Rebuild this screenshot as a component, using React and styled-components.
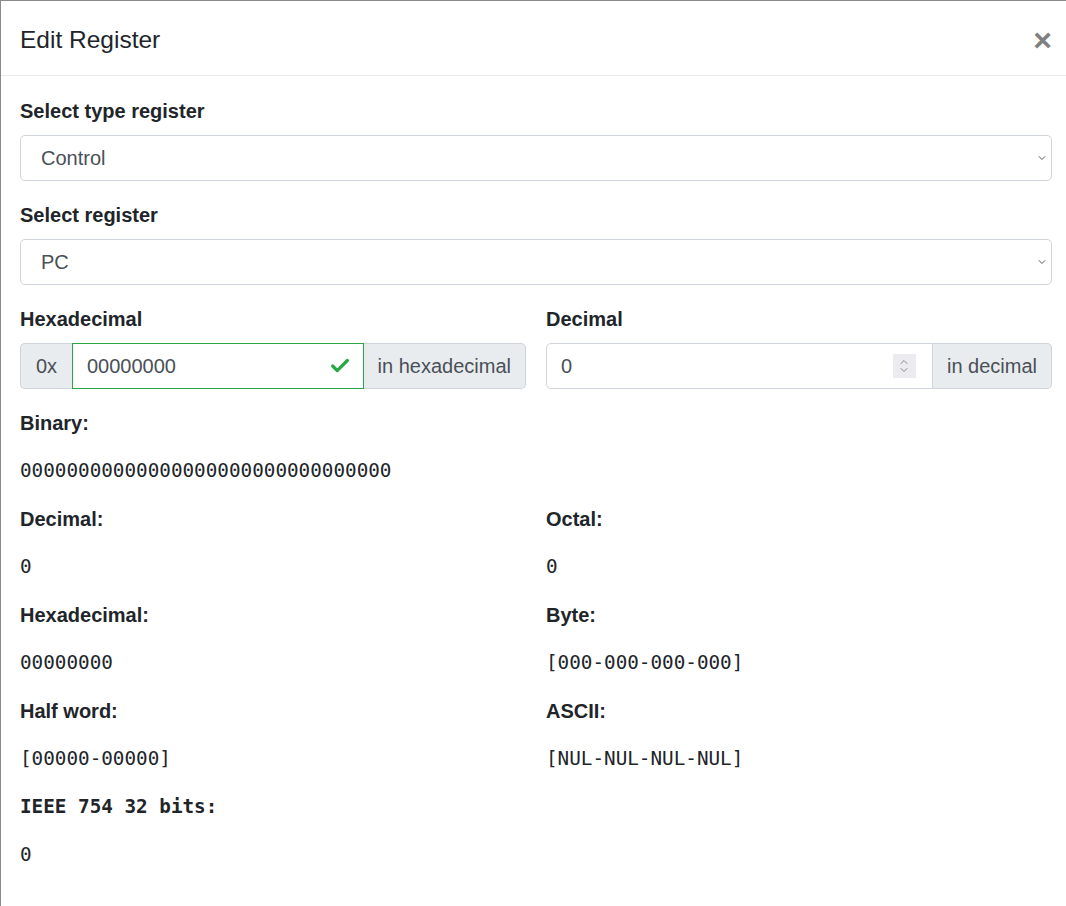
import React from "react";
import styled, { createGlobalStyle } from "styled-components";
import { ChevronDown, ChevronUp, Check } from "lucide-react";

const GlobalStyle = createGlobalStyle`
  html, body {
    margin: 0;
    padding: 0;
    background: #ffffff;
    overflow: hidden;
  }
  body {
    font-family: "Liberation Sans", Arial, sans-serif;
    color: #212529;
  }
`;

const Modal = styled.div`
  width: 1072px;
  min-height: 906px;
  box-sizing: border-box;
  background: #ffffff;
  border-top: 1px solid #8a8a8a;
  border-left: 1px solid #8a8a8a;
`;

const Header = styled.div`
  height: 75px;
  box-sizing: border-box;
  display: flex;
  align-items: center;
  justify-content: space-between;
  padding: 3px 20px 0 19px;
  border-bottom: 1px solid #e9ecef;
`;

const Title = styled.h5`
  margin: 0;
  font-size: 24.5px;
  font-weight: 400;
  line-height: 30px;
  color: #212529;
`;

const Close = styled.button`
  border: 0;
  background: transparent;
  padding: 0;
  font-family: "Liberation Sans", Arial, sans-serif;
  font-size: 32px;
  font-weight: 700;
  line-height: 1;
  color: #808080;
  cursor: pointer;
`;

const Body = styled.div`
  padding: 20px 20px 20px 19px;
`;

const FormGroup = styled.div`
  margin-bottom: ${(p) => (p.last ? "20px" : "19px")};
`;

const Label = styled.label`
  display: block;
  font-size: 20px;
  font-weight: 700;
  line-height: 30px;
  margin-bottom: 9px;
  color: #212529;
`;

const SelectWrap = styled.div`
  position: relative;
`;

const Select = styled.select`
  width: 100%;
  height: 46px;
  box-sizing: border-box;
  appearance: none;
  -webkit-appearance: none;
  border: 1px solid #ced4da;
  border-radius: 5px;
  background: #ffffff;
  padding: 0 20px;
  font-family: "Liberation Sans", Arial, sans-serif;
  font-size: 20px;
  color: #495057;
`;

const SelectArrow = styled.span`
  position: absolute;
  right: 4px;
  top: 50%;
  transform: translateY(-50%);
  display: flex;
  color: #5a5a5a;
  pointer-events: none;
`;

const Row = styled.div`
  display: grid;
  grid-template-columns: 1fr 1fr;
  column-gap: 20px;
`;

const InputGroup = styled.div`
  display: flex;
  height: 46px;
`;

const Addon = styled.div`
  display: flex;
  align-items: center;
  justify-content: center;
  box-sizing: border-box;
  padding: 0 14px;
  min-width: ${(p) => p.width || "auto"};
  background: #e9ecef;
  border: 1px solid #ced4da;
  font-size: 20px;
  color: #495057;
  border-radius: ${(p) => (p.side === "left" ? "5px 0 0 5px" : "0 5px 5px 0")};
  ${(p) => (p.side === "left" ? "border-right: 0;" : "border-left: 0;")}
`;

const Field = styled.div`
  flex: 1;
  display: flex;
  align-items: center;
  box-sizing: border-box;
  padding: 0 12px 0 14px;
  border: 1px solid ${(p) => (p.valid ? "#28a745" : "#ced4da")};
  border-radius: ${(p) => (p.roundLeft ? "5px 0 0 5px" : "0")};
  background: #ffffff;
`;

const FieldText = styled.span`
  flex: 1;
  font-size: 20px;
  color: #495057;
`;

const Spinner = styled.div`
  width: 23px;
  height: 24px;
  background: #ececf0;
  display: flex;
  flex-direction: column;
  align-items: center;
  justify-content: center;
  color: #8a8a8e;
  margin-right: 4px;
`;

const Results = styled.div`
  display: grid;
  grid-template-columns: 1fr 1fr;
  column-gap: 20px;
`;

const Item = styled.div`
  grid-column: ${(p) => (p.full ? "1 / span 2" : "auto")};
`;

const ItemLabel = styled.div`
  font-family: ${(p) =>
    p.mono ? '"DejaVu Sans Mono", monospace' : '"Liberation Sans", Arial, sans-serif'};
  font-size: ${(p) => (p.mono ? "19.3px" : "20px")};
  font-weight: 700;
  line-height: 28px;
  margin-bottom: 20px;
  color: #212529;
  white-space: pre;
`;

const ItemValue = styled.div`
  font-family: "DejaVu Sans Mono", monospace;
  font-size: 19.3px;
  line-height: 28px;
  margin-bottom: 20px;
  color: #212529;
  white-space: pre;
`;

const results = [
  { label: "Binary:", value: "00000000000000000000000000000000", full: true },
  { label: "Decimal:", value: "0" },
  { label: "Octal:", value: "0" },
  { label: "Hexadecimal:", value: "00000000" },
  { label: "Byte:", value: "[000-000-000-000]" },
  { label: "Half word:", value: "[00000-00000]" },
  { label: "ASCII:", value: "[NUL-NUL-NUL-NUL]" },
  { label: "IEEE 754 32 bits:", value: "0", mono: true },
];

const App = () => {
  return (
    <>
      <GlobalStyle />
      <Modal>
        <Header>
          <Title>Edit Register</Title>
          <Close aria-label="Close">×</Close>
        </Header>
        <Body>
          <FormGroup>
            <Label>Select type register</Label>
            <SelectWrap>
              <Select defaultValue="control">
                <option value="control">Control</option>
                <option value="integer">Integer</option>
                <option value="float">Floating point</option>
              </Select>
              <SelectArrow>
                <ChevronDown size={12} strokeWidth={2} />
              </SelectArrow>
            </SelectWrap>
          </FormGroup>
          <FormGroup>
            <Label>Select register</Label>
            <SelectWrap>
              <Select defaultValue="pc">
                <option value="pc">PC</option>
                <option value="ir">IR</option>
                <option value="sr">SR</option>
              </Select>
              <SelectArrow>
                <ChevronDown size={12} strokeWidth={2} />
              </SelectArrow>
            </SelectWrap>
          </FormGroup>
          <FormGroup last>
            <Row>
              <div>
                <Label>Hexadecimal</Label>
                <InputGroup>
                  <Addon side="left" width="52px">0x</Addon>
                  <Field valid>
                    <FieldText>00000000</FieldText>
                    <Check size={22} strokeWidth={3.5} color="#28a745" />
                  </Field>
                  <Addon side="right">in hexadecimal</Addon>
                </InputGroup>
              </div>
              <div>
                <Label>Decimal</Label>
                <InputGroup>
                  <Field roundLeft>
                    <FieldText>0</FieldText>
                    <Spinner>
                      <ChevronUp size={12} strokeWidth={2} style={{ marginBottom: -2 }} />
                      <ChevronDown size={12} strokeWidth={2} style={{ marginTop: -2 }} />
                    </Spinner>
                  </Field>
                  <Addon side="right">in decimal</Addon>
                </InputGroup>
              </div>
            </Row>
          </FormGroup>
          <Results>
            {results.map((r) => (
              <Item key={r.label} full={r.full}>
                <ItemLabel mono={r.mono}>{r.label}</ItemLabel>
                <ItemValue>{r.value}</ItemValue>
              </Item>
            ))}
          </Results>
        </Body>
      </Modal>
    </>
  );
};

export default App;
